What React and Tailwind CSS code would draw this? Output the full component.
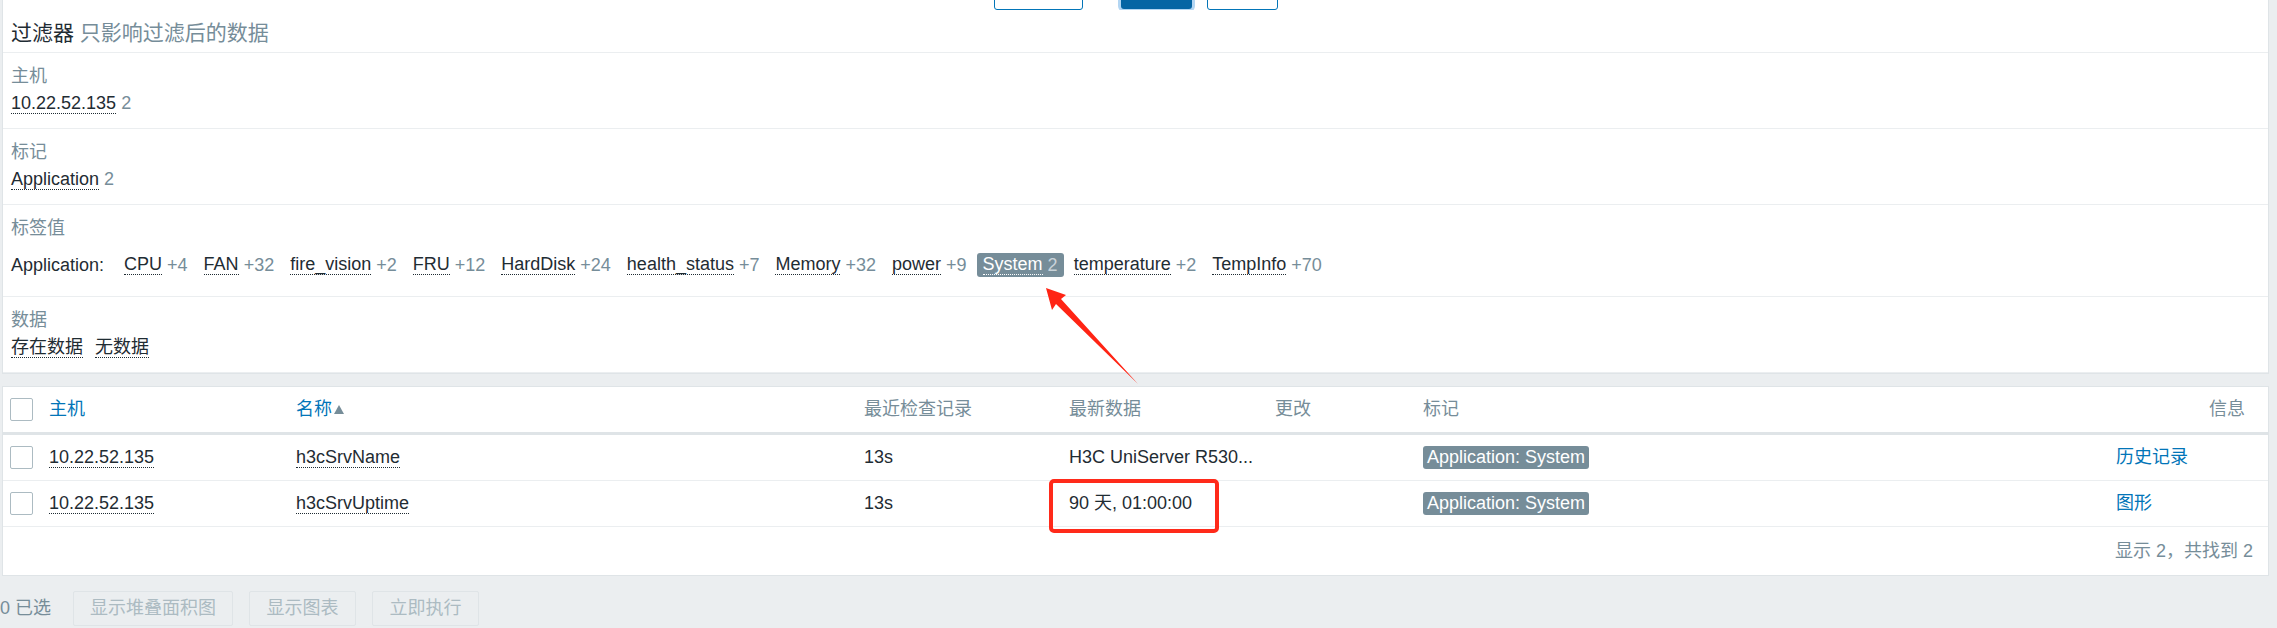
import React from 'react';

const font = "font-[family-name:'Liberation_Sans','Noto_Sans_CJK_SC',sans-serif]";

const tagValues = [
  { name: 'CPU', count: '+4' },
  { name: 'FAN', count: '+32' },
  { name: 'fire_vision', count: '+2' },
  { name: 'FRU', count: '+12' },
  { name: 'HardDisk', count: '+24' },
  { name: 'health_status', count: '+7' },
  { name: 'Memory', count: '+32' },
  { name: 'power', count: '+9' },
  { name: 'System', count: '2', selected: true },
  { name: 'temperature', count: '+2' },
  { name: 'TempInfo', count: '+70' },
];

const rows = [
  { host: '10.22.52.135', name: 'h3cSrvName', check: '13s', value: 'H3C UniServer R530...', link: '历史记录' },
  { host: '10.22.52.135', name: 'h3cSrvUptime', check: '13s', value: '90 天, 01:00:00', link: '图形' },
];

const cols = 'grid grid-cols-[39px_247px_568px_205px_206px_148px_693px_79px_1fr] items-center pl-[2px] pr-[15px]';

function Link({ children, light }) {
  return (
    <span className={`inline-block leading-[19px] border-b border-dotted ${light ? 'border-white' : 'border-[#1f2c33]'}`}>
      {children}
    </span>
  );
}

function Section({ label, children, tall }) {
  return (
    <div className={`border-b border-[#ebeef0] pl-[8px] pt-[13px] ${tall ? 'pb-[19px]' : 'pb-[15px]'}`}>
      <div className="leading-[20px] text-[#768d99]">{label}</div>
      <div className={tall ? 'mt-[15px]' : 'mt-[7px] h-[20px] leading-[20px]'}>{children}</div>
    </div>
  );
}

function Checkbox() {
  return <div className="w-[23px] h-[23px] rounded-[2px] border border-[#acbbc2] bg-white" />;
}

export default function App() {
  return (
    <div className={`${font} relative h-[628px] w-full overflow-hidden bg-[#ebeef0] text-[18px] text-[#1f2c33]`}>
      <div className="ml-[2px] mr-[8px] border-x border-b border-[#dfe4e7] bg-white">
        <div className="flex h-[10px] items-end justify-center overflow-hidden">
          <button className="mr-[38px] h-[30px] w-[89px] shrink-0 rounded-[3px] border border-[#0275b8] bg-white" />
          <button className="mb-[1px] mr-[15px] h-[30px] w-[71px] shrink-0 rounded-[3px] bg-[#0565a4] ring-[3px] ring-[#b3d6f3]" />
          <button className="h-[30px] w-[71px] shrink-0 rounded-[3px] border border-[#0275b8] bg-white" />
        </div>
        <div className="border-b border-[#ebeef0] pl-[8px] pt-[11px] pb-[7px] text-[21px] leading-[24px]">
          过滤器 <span className="text-[#768d99]">只影响过滤后的数据</span>
        </div>
        <Section label="主机">
          <Link>10.22.52.135</Link> <span className="text-[#768d99]">2</span>
        </Section>
        <Section label="标记">
          <Link>Application</Link> <span className="text-[#768d99]">2</span>
        </Section>
        <Section label="标签值" tall>
          <div className="flex h-[24px] items-center gap-[4px]">
            <span className="mr-[10px]">Application:</span>
            {tagValues.map((t) => (
              <span
                key={t.name}
                className={`flex h-[24px] items-center rounded-[3px] px-[6px] ${t.selected ? 'bg-[#768d99] text-white' : ''}`}
              >
                <Link light={t.selected}>{t.name}</Link>
                <span className={`ml-[5px] ${t.selected ? 'text-[#c9d3d9]' : 'text-[#768d99]'}`}>{t.count}</span>
              </span>
            ))}
          </div>
        </Section>
        <Section label="数据">
          <Link>存在数据</Link>
          <span className="ml-[12px]">
            <Link>无数据</Link>
          </span>
        </Section>
      </div>

      <div className="ml-[2px] mr-[8px] mt-[12px] border border-[#dfe4e7] bg-white">
        <div className={`${cols} h-[48px] border-b-[3px] border-[#dfe4e7]`}>
          <div className="pl-[5px]">
            <Checkbox />
          </div>
          <div className="pl-[5px] text-[#0275b8]">主机</div>
          <div className="flex items-center pl-[5px] text-[#0275b8]">
            名称
            <span className="ml-[2px] h-0 w-0 border-x-[5px] border-b-[9px] border-x-transparent border-b-[#768d99]" />
          </div>
          <div className="pl-[5px] text-[#768d99]">最近检查记录</div>
          <div className="pl-[5px] text-[#768d99]">最新数据</div>
          <div className="pl-[5px] text-[#768d99]">更改</div>
          <div className="pl-[5px] text-[#768d99]">标记</div>
          <div />
          <div className="pr-[8px] text-right text-[#768d99]">信息</div>
        </div>
        {rows.map((r, i) => (
          <div key={i} className={`${cols} h-[46px] border-b border-[#ebeef0]`}>
            <div className="pl-[5px]">
              <Checkbox />
            </div>
            <div className="pl-[5px]">
              <Link>{r.host}</Link>
            </div>
            <div className="pl-[5px]">
              <Link>{r.name}</Link>
            </div>
            <div className="pl-[5px]">{r.check}</div>
            <div className="truncate pl-[5px]">{r.value}</div>
            <div />
            <div className="pl-[5px]">
              <span className="inline-block h-[23px] rounded-[3px] bg-[#768d99] px-[4px] leading-[23px] text-white">
                Application: System
              </span>
            </div>
            <div className="whitespace-nowrap pl-[5px] text-[#0275b8]">{r.link}</div>
            <div />
          </div>
        ))}
        <div className="flex h-[48px] items-center justify-end pr-[15px] text-[#768d99]">显示 2，共找到 2</div>
      </div>

      <div className="mt-[15px] flex items-center">
        <span className="mr-[22px] text-[#768d99]">0 已选</span>
        <button className="h-[35px] w-[160px] rounded-[2px] border border-[#dfe4e7] bg-[#ebeef0] text-[#acbbc2]">显示堆叠面积图</button>
        <button className="ml-[16px] h-[35px] w-[107px] rounded-[2px] border border-[#dfe4e7] bg-[#ebeef0] text-[#acbbc2]">显示图表</button>
        <button className="ml-[16px] h-[35px] w-[107px] rounded-[2px] border border-[#dfe4e7] bg-[#ebeef0] text-[#acbbc2]">立即执行</button>
      </div>

      {/* annotation overlays */}
      <div className="pointer-events-none absolute left-[1049px] top-[479px] h-[54px] w-[170px] rounded-[5px] border-[4px] border-[#ff2a1a]" />
      <svg className="pointer-events-none absolute left-0 top-0" width="2277" height="628">
        <polygon points="1046,288 1066,295 1061,299 1138,384 1056,304 1052,310" fill="#ff2414" />
      </svg>
    </div>
  );
}
